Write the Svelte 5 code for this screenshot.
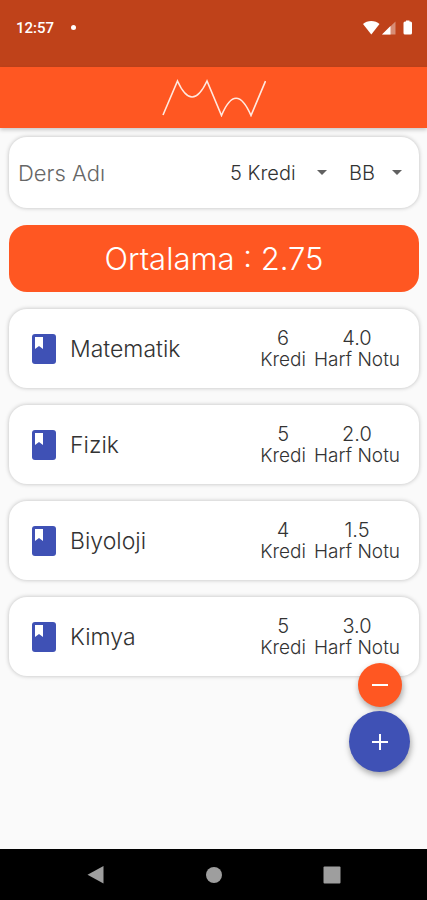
<script>
    let name = "";
    let credit = 5;
    let grade = "BB";

    const credits = [1, 2, 3, 4, 5, 6, 7, 8, 9, 10];
    const grades = ["AA", "BA", "BB", "CB", "CC", "DC", "DD", "FF"];
    const points = { AA: 4, BA: 3.5, BB: 3, CB: 2.5, CC: 2, DC: 1.5, DD: 1, FF: 0 };

    let lessons = [
        { name: "Matematik", credit: 6, point: 4 },
        { name: "Fizik", credit: 5, point: 2 },
        { name: "Biyoloji", credit: 4, point: 1.5 },
        { name: "Kimya", credit: 5, point: 3 },
    ];

    // weighted by credit
    $: total = lessons.reduce((sum, l) => sum + l.credit, 0);
    $: average = total ? lessons.reduce((sum, l) => sum + l.credit * l.point, 0) / total : 0;

    function add() {
        if (!name.trim()) return;
        lessons = [...lessons, { name: name.trim(), credit, point: points[grade] }];
        name = "";
    }

    function removeLast() {
        lessons = lessons.slice(0, -1);
    }
</script>

<div class="screen">
    <div class="status">
        <span class="time">12:57</span>
        <span class="dot"></span>
        <svg class="signals" width="50" height="16" viewBox="0 0 50 16">
            <path d="M0 4 C4 0 12.500 0 16.500 4 L8.300 14.500 Z" fill="#fff" />
            <path d="M32.500 1.500 V14.500 H19 Z" fill="#fff" opacity="0.4" />
            <path d="M27.500 6 V14.500 H19 Z" fill="#fff" />
            <path d="M42 1.500 H43 V0.500 H46.500 V1.500 H47.500 Q49 1.500 49 3 V13 Q49 14.500 47.500 14.500 H42 Q40.500 14.500 40.500 13 V3 Q40.500 1.500 42 1.500 Z" fill="#fff" />
        </svg>
    </div>

    <header>
        <svg width="104" height="38" viewBox="0 0 104 38" role="img" aria-label="MW">
            <path
                d="M1 36 L15.500 2 Q30 34 45 2 L59.500 36.500 Q74 2 89 36.500 L103.500 2"
                fill="none"
                stroke="#ffe9e0"
                stroke-width="1.600"
            />
        </svg>
    </header>

    <main>
        <div class="card form">
            <input type="text" placeholder="Ders Adı" aria-label="Ders Adı" bind:value={name} />
            <div class="pick credit">
                <select aria-label="Kredi" bind:value={credit}>
                    {#each credits as c}
                        <option value={c}>{c} Kredi</option>
                    {/each}
                </select>
                <svg width="10" height="5" viewBox="0 0 10 5"><path d="M0 0 H10 L5 5 Z" fill="#616161" /></svg>
            </div>
            <div class="pick grade">
                <select aria-label="Harf Notu" bind:value={grade}>
                    {#each grades as g}
                        <option value={g}>{g}</option>
                    {/each}
                </select>
                <svg width="10" height="5" viewBox="0 0 10 5"><path d="M0 0 H10 L5 5 Z" fill="#616161" /></svg>
            </div>
        </div>

        <div class="average">Ortalama : {average.toFixed(2)}</div>

        {#each lessons as lesson}
            <div class="card lesson">
                <svg class="book" width="24" height="30" viewBox="0 0 24 30">
                    <rect width="24" height="30" rx="3" fill="#3f51b5" />
                    <path d="M3 3 H11 V15 L7 12 L3 15 Z" fill="#fff" />
                </svg>
                <span class="title">{lesson.name}</span>
                <div class="stat"><b>{lesson.credit}</b><span>Kredi</span></div>
                <div class="stat"><b>{lesson.point.toFixed(1)}</b><span>Harf Notu</span></div>
            </div>
        {/each}
    </main>

    <div class="fabs">
        <button class="minus" aria-label="Sil" on:click={removeLast}>
            <svg width="16" height="16" viewBox="0 0 16 16"><path d="M0 8 H16" stroke="#fff" stroke-width="2" /></svg>
        </button>
        <button class="plus" aria-label="Ekle" on:click={add}>
            <svg width="16" height="16" viewBox="0 0 16 16"><path d="M0 8 H16 M8 0 V16" stroke="#fff" stroke-width="2" /></svg>
        </button>
    </div>

    <nav>
        <button aria-label="Geri">
            <svg width="18" height="18" viewBox="0 0 18 18"><path d="M16.500 0 V17.500 L0.500 8.700 Z" fill="#9e9e9e" /></svg>
        </button>
        <button aria-label="Ana ekran">
            <svg width="18" height="18" viewBox="0 0 18 18"><circle cx="9" cy="9" r="8" fill="#9e9e9e" /></svg>
        </button>
        <button aria-label="Son uygulamalar">
            <svg width="18" height="18" viewBox="0 0 18 18"><rect x="0.500" y="0.500" width="17" height="17" rx="1" fill="#9e9e9e" /></svg>
        </button>
    </nav>
</div>

<style>
    :global(body) {
        margin: 0;
    }

    .screen {
        box-sizing: border-box;
        min-height: 100vh;
        display: flex;
        flex-direction: column;
        position: relative;
        background: #fafafa;
        color: #333;
        font-family: Inter, "Open Sans", sans-serif;
        font-weight: 300;
    }

    svg {
        display: block;
        flex: none;
    }

    /* android status bar */
    .status {
        display: flex;
        align-items: center;
        height: 55px;
        padding: 0 14px 12px 16px;
        background: #bf421a;
    }

    .time {
        color: #fff;
        font: 500 15px/20px Roboto, sans-serif;
    }

    .dot {
        width: 5px;
        height: 5px;
        margin-left: 17px;
        border-radius: 50%;
        background: #fff;
    }

    .signals {
        margin-left: auto;
    }

    header {
        display: flex;
        justify-content: center;
        align-items: center;
        height: 61px;
        background: #ff5722;
        box-shadow: 0 2px 4px rgba(0, 0, 0, 0.2);
    }

    main {
        flex: 1;
        display: flex;
        flex-direction: column;
        gap: 17px;
        padding: 9px 8px 80px 9px;
    }

    .card {
        display: flex;
        align-items: center;
        border-radius: 18px;
        background: #fff;
        box-shadow: 0 0 4px rgba(0, 0, 0, 0.25);
    }

    .form {
        height: 71px;
        padding: 0 17px 0 9px;
    }

    input,
    select {
        padding: 0;
        border: 0;
        outline: 0;
        background: none;
        font: inherit;
        color: #333;
    }

    input {
        flex: 1;
        min-width: 0;
        height: 48px;
        font-size: 22px;
    }

    input::placeholder {
        color: #666;
        opacity: 1;
    }

    .pick {
        display: flex;
        align-items: center;
        position: relative;
        font-size: 20px;
    }

    /* the arrow lies over the select so the whole box stays clickable */
    .pick svg {
        position: absolute;
        right: 0;
        pointer-events: none;
    }

    select {
        appearance: none;
        width: 100%;
        height: 48px;
    }

    .credit {
        width: 97px;
        margin-right: 22px;
    }

    .grade {
        width: 53px;
    }

    .average {
        border-radius: 18px;
        background: #ff5722;
        color: #fff;
        font-size: 31px;
        line-height: 67px;
        text-align: center;
    }

    .lesson {
        height: 79px;
        padding: 0 19px 0 23px;
    }

    .title {
        flex: 1;
        margin-left: 14px;
        font-size: 23px;
    }

    .stat {
        display: flex;
        flex-direction: column;
        align-items: center;
        margin-left: 8px;
        font-size: 19px;
        line-height: 22px;
    }

    .stat b {
        font-size: 20px;
        font-weight: 300;
    }

    .fabs {
        position: absolute;
        right: 17px;
        bottom: 128px;
        display: flex;
        flex-direction: column;
        align-items: center;
        gap: 4px;
    }

    button {
        display: flex;
        justify-content: center;
        align-items: center;
        padding: 0;
        border: 0;
        background: none;
        cursor: pointer;
    }

    .fabs button {
        border-radius: 50%;
        box-shadow: 1px 3px 6px rgba(0, 0, 0, 0.35);
    }

    .fabs .minus {
        width: 44px;
        height: 44px;
        background: #ff5722;
    }

    .fabs .plus {
        width: 61px;
        height: 61px;
        background: #3f51b5;
    }

    /* android navigation bar */
    nav {
        display: flex;
        justify-content: center;
        align-items: center;
        gap: 100px;
        height: 51px;
        background: #000;
    }
</style>
